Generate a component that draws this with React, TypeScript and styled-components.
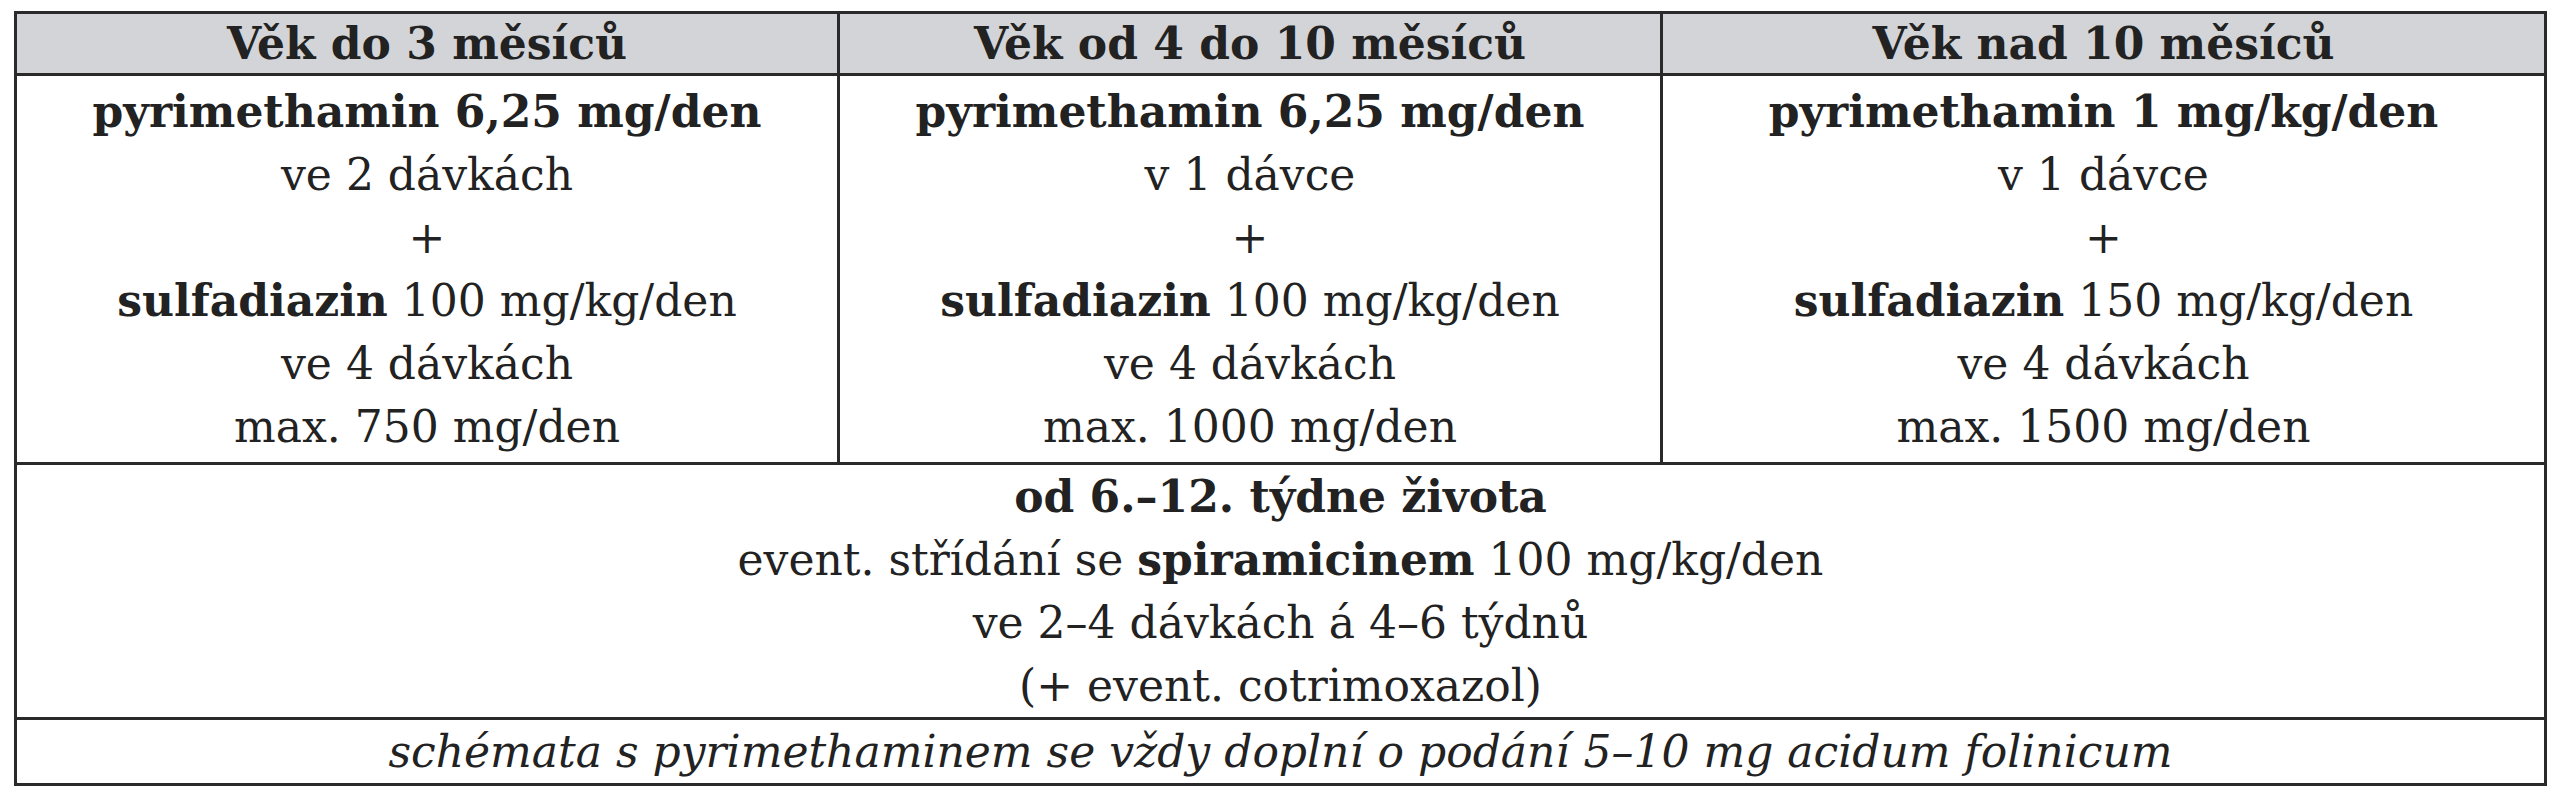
import React, { FC } from 'react';
import styled, { createGlobalStyle } from 'styled-components';

const GlobalStyle = createGlobalStyle`
  html, body {
    margin: 0;
    padding: 0;
    background: #ffffff;
  }
`;

const Page = styled.div`
  padding: 11px 0 0 14px;
  font-family: 'DejaVu Serif', 'Liberation Serif', serif;
  color: #222222;
`;

const Table = styled.table`
  border-collapse: collapse;
  width: 2530px;
  table-layout: fixed;
  border: 3px solid #2a2a2a;
`;

const Col = styled.col<{ $w: number }>`
  width: ${(p) => p.$w}px;
`;

const HeadCell = styled.th`
  background: #d3d4d8;
  border: 3px solid #2a2a2a;
  height: 59px;
  padding: 0;
  font-size: 44px;
  font-weight: bold;
  line-height: 59px;
  text-align: center;
`;

const Cell = styled.td<{ $pad?: number }>`
  border: 3px solid #2a2a2a;
  padding: ${(p) => p.$pad ?? 4}px 0;
  font-size: 44px;
  line-height: 63px;
  text-align: center;
  vertical-align: top;
`;

const Line = styled.div<{ $bold?: boolean; $italic?: boolean }>`
  font-weight: ${(p) => (p.$bold ? 'bold' : 'normal')};
  font-style: ${(p) => (p.$italic ? 'italic' : 'normal')};
  white-space: nowrap;
`;

type Scheme = {
  pyr: string;
  pyrDose: string;
  sulfa: string;
  max: string;
};

const schemes: Scheme[] = [
  { pyr: 'pyrimethamin 6,25 mg/den', pyrDose: 've 2 dávkách', sulfa: '100 mg/kg/den', max: 'max. 750 mg/den' },
  { pyr: 'pyrimethamin 6,25 mg/den', pyrDose: 'v 1 dávce', sulfa: '100 mg/kg/den', max: 'max. 1000 mg/den' },
  { pyr: 'pyrimethamin 1 mg/kg/den', pyrDose: 'v 1 dávce', sulfa: '150 mg/kg/den', max: 'max. 1500 mg/den' },
];

const heads = ['Věk do 3 měsíců', 'Věk od 4 do 10 měsíců', 'Věk nad 10 měsíců'];

const SchemeCell: FC<{ s: Scheme }> = ({ s }) => (
  <Cell>
    <Line $bold>{s.pyr}</Line>
    <Line>{s.pyrDose}</Line>
    <Line>+</Line>
    <Line>
      <b>sulfadiazin</b> {s.sulfa}
    </Line>
    <Line>ve 4 dávkách</Line>
    <Line>{s.max}</Line>
  </Cell>
);

export default function App() {
  return (
    <>
      <GlobalStyle />
      <Page>
        <Table>
          <colgroup>
            <Col $w={823} />
            <Col $w={823} />
            <Col $w={884} />
          </colgroup>
          <thead>
            <tr>
              {heads.map((h) => (
                <HeadCell key={h}>{h}</HeadCell>
              ))}
            </tr>
          </thead>
          <tbody>
            <tr>
              {schemes.map((s, i) => (
                <SchemeCell key={i} s={s} />
              ))}
            </tr>
            <tr>
              <Cell colSpan={3} $pad={0}>
                <Line $bold>od 6.–12. týdne života</Line>
                <Line>
                  event. střídání se <b>spiramicinem</b> 100 mg/kg/den
                </Line>
                <Line>ve 2–4 dávkách á 4–6 týdnů</Line>
                <Line>(+ event. cotrimoxazol)</Line>
              </Cell>
            </tr>
            <tr>
              <Cell colSpan={3} $pad={0}>
                <Line $italic>
                  schémata s pyrimethaminem se vždy doplní o podání 5–10 mg acidum folinicum
                </Line>
              </Cell>
            </tr>
          </tbody>
        </Table>
      </Page>
    </>
  );
}
